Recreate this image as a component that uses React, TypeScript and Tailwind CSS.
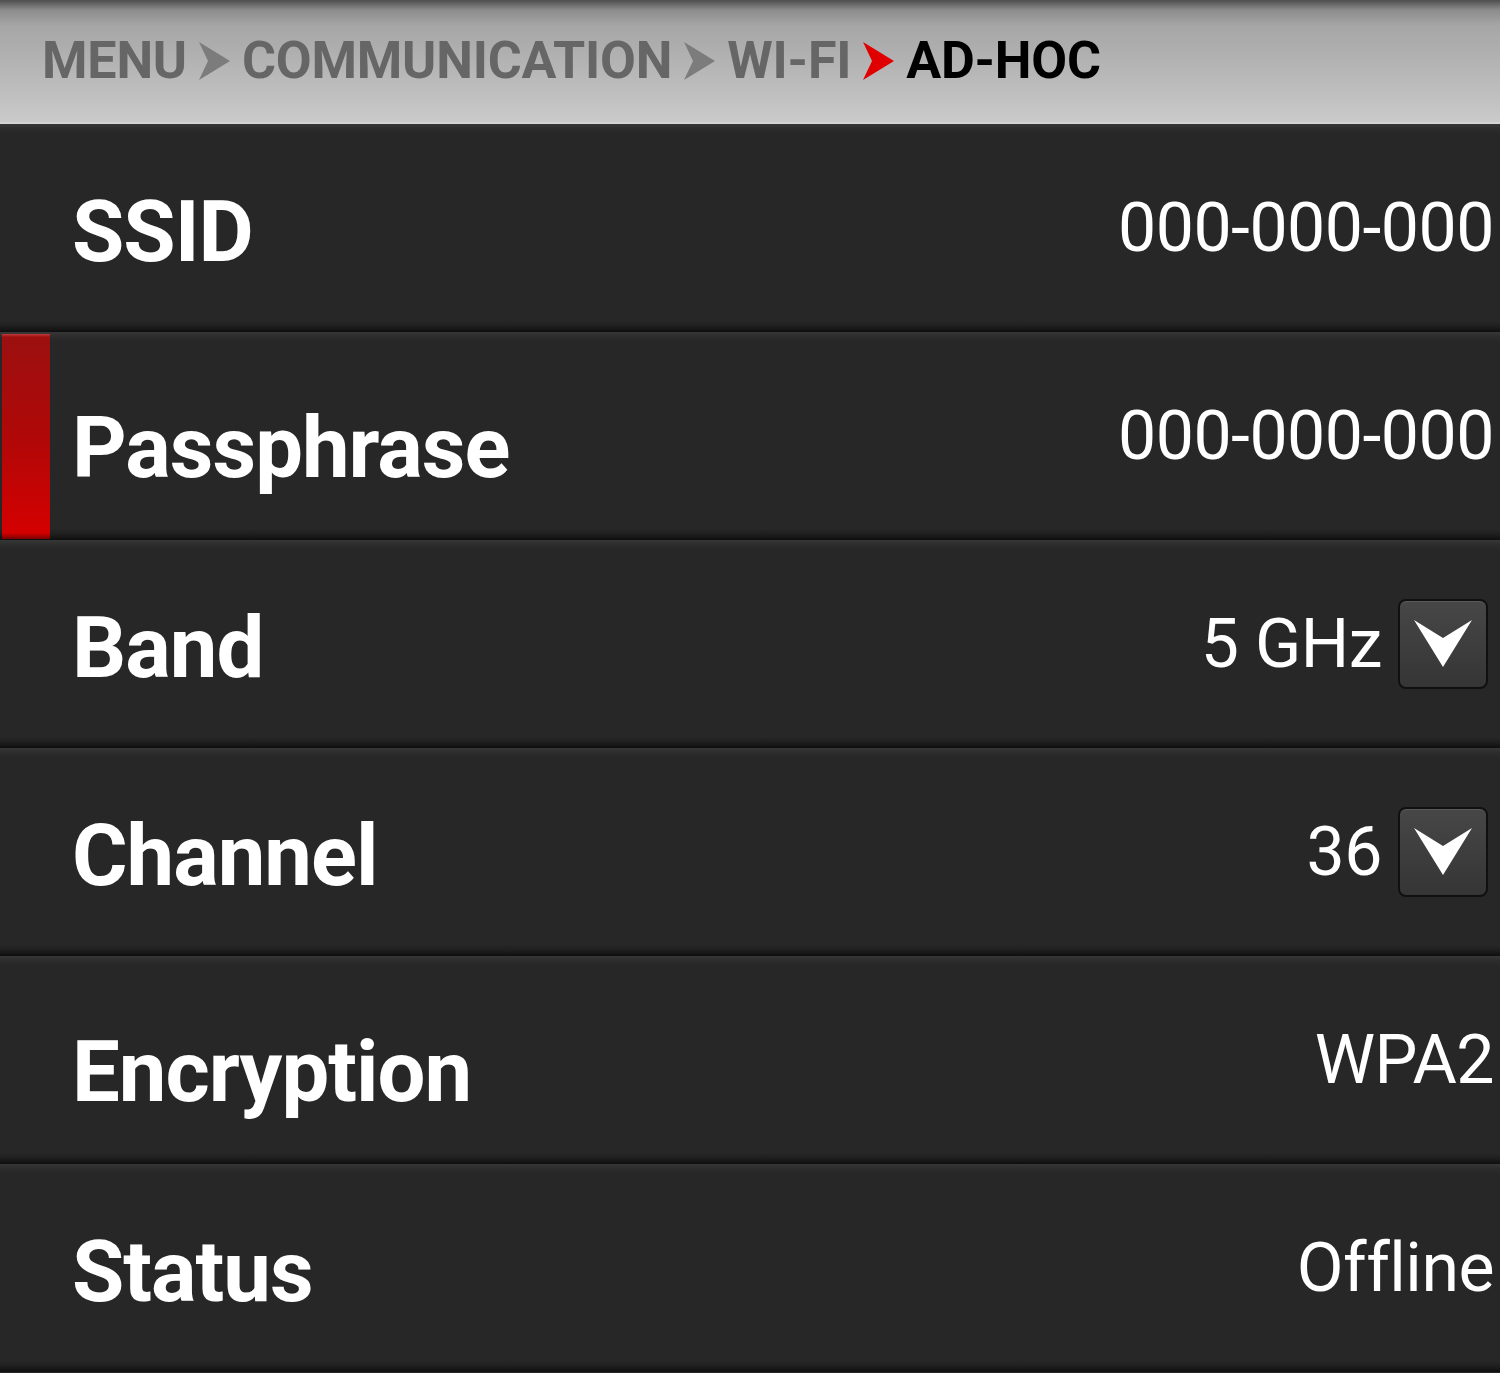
const crumbs = [
  { label: "MENU", active: false },
  { label: "COMMUNICATION", active: false },
  { label: "WI-FI", active: false },
  { label: "AD-HOC", active: true },
];

const rows = [
  { label: "SSID", value: "000-000-000", dropdown: false, selected: false, descender: false },
  { label: "Passphrase", value: "000-000-000", dropdown: false, selected: true, descender: true },
  { label: "Band", value: "5 GHz", dropdown: true, selected: false, descender: false },
  { label: "Channel", value: "36", dropdown: true, selected: false, descender: false },
  { label: "Encryption", value: "WPA2", dropdown: false, selected: false, descender: true },
  { label: "Status", value: "Offline", dropdown: false, selected: false, descender: false },
];

const Arrow = ({ red = false }: { red?: boolean }) => (
  <svg width="31" height="38" viewBox="0 0 31 38" className="shrink-0">
    <polygon points="0,0 31,19 0,38 9,19" fill={red ? "#e10000" : "#7c7c7c"} />
  </svg>
);

const DropdownButton = () => (
  <div className="w-[90px] h-[90px] rounded-[8px] border-2 border-[#101010] bg-[linear-gradient(180deg,#474747,#353535)] shadow-[inset_0_1px_0_#5a5a5a] flex items-center justify-center">
    <svg width="58" height="48" viewBox="0 0 58 48">
      <polygon points="0,0 29,18 58,0 29,47" fill="#ffffff" />
    </svg>
  </div>
);

export default function App() {
  return (
    <div className="w-[1500px] h-[1373px] bg-[#272727] overflow-hidden font-['Roboto',sans-serif]">
      <div className="h-[124px] flex items-center gap-[12px] pl-[42px] border-b-2 border-[#d4d4d4] bg-[linear-gradient(180deg,#4e4e4e_0px,#8c8c8c_10px,#a6a6a6_26px,#b6b6b6_70px,#cacaca_122px)]">
        {crumbs.map((c, i) => (
          <div key={c.label} className="flex items-center gap-[12px]">
            {i > 0 && <Arrow red={c.active} />}
            <span
              className={
                "text-[52px] leading-none font-bold tracking-[-0.2px] " +
                (c.active ? "text-black" : "text-[#666666]")
              }
            >
              {c.label}
            </span>
          </div>
        ))}
      </div>
      {rows.map((row) => (
        <div
          key={row.label}
          className="h-[208px] flex items-stretch pr-[6px] bg-[linear-gradient(180deg,#373737_0px,#2c2c2c_5px,#272727_10px,#272727_197px,#1d1d1d_203px,#0e0e0e_208px)]"
        >
          <div className="w-[50px] pl-[2px] pt-[2px] pb-[1px] flex shrink-0">
            {row.selected && (
              <div className="flex-1 bg-[linear-gradient(180deg,#c23a3a_0px,#9c1010_3px,#b00808_50%,#d40000_97%,#7a0000_100%)]" />
            )}
          </div>
          <div
            className={
              "pl-[22px] text-white font-bold text-[85px] leading-none tracking-[-1px] " +
              (row.descender ? "pt-[74px]" : "pt-[66px]")
            }
          >
            {row.label}
          </div>
          <div className="ml-auto flex items-center gap-[16px]">
            <span className="text-white text-[68px] leading-none tracking-[-0.5px]">{row.value}</span>
            {row.dropdown && (
              <div className="mr-[6px]">
                <DropdownButton />
              </div>
            )}
          </div>
        </div>
      ))}
    </div>
  );
}
